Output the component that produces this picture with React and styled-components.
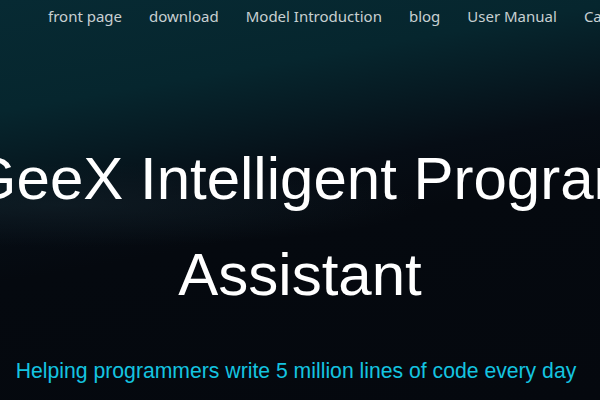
import React from 'react'
import styled, { createGlobalStyle } from 'styled-components'

const Global = createGlobalStyle`
  html, body {
    margin: 0;
    padding: 0;
    background: #05090f;
    overflow: hidden;
  }
`

const Hero = styled.div`
  width: 600px;
  height: 400px;
  overflow: hidden;
  display: flex;
  flex-direction: column;
  align-items: center;
  background:
    radial-gradient(ellipse 520px 60px at 60px 205px, rgba(20, 36, 44, 0.55), rgba(20, 36, 44, 0) 70%),
    linear-gradient(170deg, #072a33 0%, #06262e 22%, #061a22 33%, #060d15 44%, #05090f 56%, #05080e 100%);
`

const Nav = styled.nav`
  align-self: stretch;
  display: flex;
  gap: 27px;
  padding: 4px 0 0 48px;
  height: 40px;
  box-sizing: border-box;
  white-space: nowrap;
`

const NavLink = styled.a`
  font-family: 'Noto Sans', 'Open Sans', sans-serif;
  font-size: 15px;
  line-height: 24px;
  color: #c8d0d2;
  text-decoration: none;
`

const Title = styled.h1`
  margin: 91px 0 0;
  font-family: 'Liberation Sans', Arial, sans-serif;
  font-weight: 400;
  font-size: 60px;
  line-height: 96px;
  color: #ffffff;
  text-align: center;
  display: flex;
  flex-direction: column;
  align-items: center;
`

const TitleLine = styled.span`
  white-space: nowrap;
`

const Subtitle = styled.p`
  margin: 36px 8px 0 0;
  font-family: 'Liberation Sans', Arial, sans-serif;
  font-size: 21.2px;
  line-height: 24px;
  color: #14c4e0;
  white-space: nowrap;
`

const links = ['front page', 'download', 'Model Introduction', 'blog', 'User Manual', 'Case']

export default function App() {
  return (
    <>
      <Global />
      <Hero>
        <Nav>
          {links.map((l) => (
            <NavLink key={l} href="#">{l}</NavLink>
          ))}
        </Nav>
        <Title>
          <TitleLine>CodeGeeX Intelligent Programming</TitleLine>
          <TitleLine>Assistant</TitleLine>
        </Title>
        <Subtitle>Helping programmers write 5 million lines of code every day</Subtitle>
      </Hero>
    </>
  )
}
